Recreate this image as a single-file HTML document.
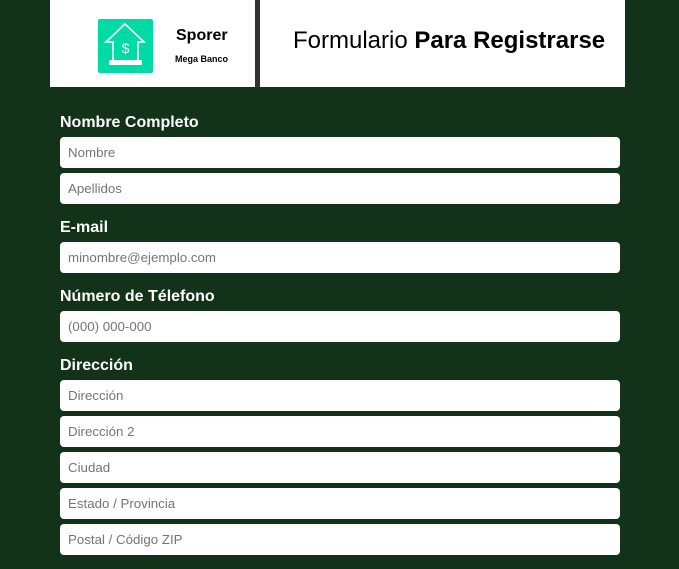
<!DOCTYPE html><html><head><style>
body{margin:0;width:679px;height:569px;background:#12331a;font-family:"Liberation Sans",Arial,sans-serif;position:relative;overflow:hidden}
.a{position:absolute}
.in{position:absolute;left:60px;width:560px;height:31px;background:#fff;border-radius:4px;box-sizing:border-box;padding-left:8px;line-height:31px;font-size:13.3px;color:#757575}
.lb{position:absolute;left:60px;color:#fff;font-weight:bold;font-size:16px}
</style></head><body>
<div class="a" style="left:50px;top:0;width:205px;height:87px;background:#fff"></div>
<div class="a" style="left:255px;top:0;width:5px;height:87px;background:#333"></div>
<div class="a" style="left:260px;top:0;width:365px;height:87px;background:#fff"></div>
<svg class="a" style="left:98px;top:19px" width="55" height="54" viewBox="0 0 55 54">
<rect width="55" height="54" rx="2" fill="#00dba6"/>
<path d="M15 43 V23 H8 L27 5 L46 23 H40 V43" stroke="#fff" stroke-width="1.6" fill="none"/>
<path d="M11 41 H44 V46 H11Z" fill="#fff"/>
<text x="27.5" y="34" font-size="14" fill="#fff" text-anchor="middle" font-family="Liberation Sans">$</text>
</svg>
<div class="a" style="left:176px;top:27px;font-weight:bold;font-size:16px">Sporer</div>
<div class="a" style="left:175px;top:54px;font-weight:bold;font-size:9px">Mega Banco</div>
<div class="a" style="left:293px;top:27px;font-size:24px">Formulario <b>Para Registrarse</b></div>
<div class="lb" style="top:114px">Nombre Completo</div>
<div class="in" style="top:137px">Nombre</div>
<div class="in" style="top:173px">Apellidos</div>
<div class="lb" style="top:219px">E-mail</div>
<div class="in" style="top:242px">minombre@ejemplo.com</div>
<div class="lb" style="top:288px">Número de Télefono</div>
<div class="in" style="top:311px">(000) 000-000</div>
<div class="lb" style="top:357px">Dirección</div>
<div class="in" style="top:380px">Dirección</div>
<div class="in" style="top:416px">Dirección 2</div>
<div class="in" style="top:452px">Ciudad</div>
<div class="in" style="top:488px">Estado / Provincia</div>
<div class="in" style="top:524px">Postal / Código ZIP</div>
</body></html>
